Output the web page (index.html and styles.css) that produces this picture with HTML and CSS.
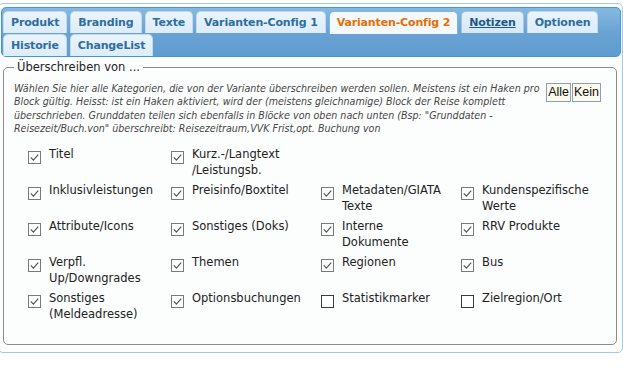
FILE: index.html
```html
<!DOCTYPE html>
<html lang="de">
<head>
<meta charset="utf-8">
<title>Varianten-Config 2</title>
<link rel="stylesheet" href="styles.css">
</head>
<body>
<div class="tabs">
  <ul class="nav">
    <li class="tab"><a>Produkt</a></li>
    <li class="tab"><a>Branding</a></li>
    <li class="tab"><a>Texte</a></li>
    <li class="tab"><a>Varianten-Config 1</a></li>
    <li class="tab active"><a>Varianten-Config 2</a></li>
    <li class="tab hover"><a>Notizen</a></li>
    <li class="tab"><a>Optionen</a></li>
    <li class="tab"><a>Historie</a></li>
    <li class="tab"><a>ChangeList</a></li>
  </ul>
  <div class="panel">
    <fieldset class="group">
      <legend class="group-title">Überschreiben von ...</legend>
      <div class="intro">
        <p class="desc">Wählen Sie hier alle Kategorien, die von der Variante überschreiben werden sollen. Meistens ist ein Haken pro Block gültig. Heisst: ist ein Haken aktiviert, wird der (meistens gleichnamige) Block der Reise komplett überschrieben. Grunddaten teilen sich ebenfalls in Blöcke von oben nach unten (Bsp: "Grunddaten - Reisezeit/Buch.von" überschreibt: Reisezeitraum,VVK Frist,opt. Buchung von</p>
        <div class="btns"><span class="btn">Alle</span><span class="btn">Kein</span></div>
      </div>
      <div class="grid">
        <label class="item"><svg class="cb" viewBox="0 0 13 13" width="13" height="13"><rect x="0.5" y="0.5" width="12" height="12" class="box"/><path d="M2.8 6.4 L5.4 9.2 L10.2 3.6" class="mark"/></svg><span class="lbl">Titel</span></label>
        <label class="item"><svg class="cb" viewBox="0 0 13 13" width="13" height="13"><rect x="0.5" y="0.5" width="12" height="12" class="box"/><path d="M2.8 6.4 L5.4 9.2 L10.2 3.6" class="mark"/></svg><span class="lbl">Kurz.-/Langtext /Leistungsb.</span></label>
        <span class="item"></span>
        <span class="item"></span>

        <label class="item"><svg class="cb" viewBox="0 0 13 13" width="13" height="13"><rect x="0.5" y="0.5" width="12" height="12" class="box"/><path d="M2.8 6.4 L5.4 9.2 L10.2 3.6" class="mark"/></svg><span class="lbl">Inklusivleistungen</span></label>
        <label class="item"><svg class="cb" viewBox="0 0 13 13" width="13" height="13"><rect x="0.5" y="0.5" width="12" height="12" class="box"/><path d="M2.8 6.4 L5.4 9.2 L10.2 3.6" class="mark"/></svg><span class="lbl">Preisinfo/Boxtitel</span></label>
        <label class="item"><svg class="cb" viewBox="0 0 13 13" width="13" height="13"><rect x="0.5" y="0.5" width="12" height="12" class="box"/><path d="M2.8 6.4 L5.4 9.2 L10.2 3.6" class="mark"/></svg><span class="lbl">Metadaten/GIATA Texte</span></label>
        <label class="item"><svg class="cb" viewBox="0 0 13 13" width="13" height="13"><rect x="0.5" y="0.5" width="12" height="12" class="box"/><path d="M2.8 6.4 L5.4 9.2 L10.2 3.6" class="mark"/></svg><span class="lbl">Kundenspezifische Werte</span></label>

        <label class="item"><svg class="cb" viewBox="0 0 13 13" width="13" height="13"><rect x="0.5" y="0.5" width="12" height="12" class="box"/><path d="M2.8 6.4 L5.4 9.2 L10.2 3.6" class="mark"/></svg><span class="lbl">Attribute/Icons</span></label>
        <label class="item"><svg class="cb" viewBox="0 0 13 13" width="13" height="13"><rect x="0.5" y="0.5" width="12" height="12" class="box"/><path d="M2.8 6.4 L5.4 9.2 L10.2 3.6" class="mark"/></svg><span class="lbl">Sonstiges (Doks)</span></label>
        <label class="item"><svg class="cb" viewBox="0 0 13 13" width="13" height="13"><rect x="0.5" y="0.5" width="12" height="12" class="box"/><path d="M2.8 6.4 L5.4 9.2 L10.2 3.6" class="mark"/></svg><span class="lbl">Interne Dokumente</span></label>
        <label class="item"><svg class="cb" viewBox="0 0 13 13" width="13" height="13"><rect x="0.5" y="0.5" width="12" height="12" class="box"/><path d="M2.8 6.4 L5.4 9.2 L10.2 3.6" class="mark"/></svg><span class="lbl">RRV Produkte</span></label>

        <label class="item"><svg class="cb" viewBox="0 0 13 13" width="13" height="13"><rect x="0.5" y="0.5" width="12" height="12" class="box"/><path d="M2.8 6.4 L5.4 9.2 L10.2 3.6" class="mark"/></svg><span class="lbl">Verpfl. Up/Downgrades</span></label>
        <label class="item"><svg class="cb" viewBox="0 0 13 13" width="13" height="13"><rect x="0.5" y="0.5" width="12" height="12" class="box"/><path d="M2.8 6.4 L5.4 9.2 L10.2 3.6" class="mark"/></svg><span class="lbl">Themen</span></label>
        <label class="item"><svg class="cb" viewBox="0 0 13 13" width="13" height="13"><rect x="0.5" y="0.5" width="12" height="12" class="box"/><path d="M2.8 6.4 L5.4 9.2 L10.2 3.6" class="mark"/></svg><span class="lbl">Regionen</span></label>
        <label class="item"><svg class="cb" viewBox="0 0 13 13" width="13" height="13"><rect x="0.5" y="0.5" width="12" height="12" class="box"/><path d="M2.8 6.4 L5.4 9.2 L10.2 3.6" class="mark"/></svg><span class="lbl">Bus</span></label>

        <label class="item"><svg class="cb" viewBox="0 0 13 13" width="13" height="13"><rect x="0.5" y="0.5" width="12" height="12" class="box"/><path d="M2.8 6.4 L5.4 9.2 L10.2 3.6" class="mark"/></svg><span class="lbl">Sonstiges (Meldeadresse)</span></label>
        <label class="item"><svg class="cb" viewBox="0 0 13 13" width="13" height="13"><rect x="0.5" y="0.5" width="12" height="12" class="box"/><path d="M2.8 6.4 L5.4 9.2 L10.2 3.6" class="mark"/></svg><span class="lbl">Optionsbuchungen</span></label>
        <label class="item"><svg class="cb off" viewBox="0 0 13 13" width="13" height="13"><rect x="0.5" y="0.5" width="12" height="12" class="box"/></svg><span class="lbl">Statistikmarker</span></label>
        <label class="item"><svg class="cb off" viewBox="0 0 13 13" width="13" height="13"><rect x="0.5" y="0.5" width="12" height="12" class="box"/></svg><span class="lbl">Zielregion/Ort</span></label>
      </div>
    </fieldset>
  </div>
</div>
</body>
</html>
```

FILE: styles.css
```css
html, body {
  margin: 0;
  padding: 0;
  background: #ffffff;
}

.tabs {
  margin: 3px 0 0 -2px;
  padding: 3px 1px 7px 2px;
  border: 1px solid #a6c9e2;
  border-radius: 5px;
  background: #fcfdfd;
}

.nav {
  list-style: none;
  margin: 0;
  padding: 2px 1px 0 1px;
  display: flex;
  flex-wrap: wrap;
  border: 1px solid #4297d7;
  border-radius: 5px;
  background: linear-gradient(#86b8e1, #6aa3d3 50%, #5f9cd0);
}

.tab {
  margin: 1px 3px 0 0;
  height: 21px;
  border: 1px solid #c5dbec;
  border-bottom: 0;
  border-radius: 5px 5px 0 0;
  background: linear-gradient(#eaf4fc, #dcecf9);
}

.tab a {
  display: block;
  padding: 0 7px;
  line-height: 21px;
  font-family: "DejaVu Sans", sans-serif;
  font-weight: bold;
  font-size: 11px;
  letter-spacing: -0.15px;
  color: #2e6e9e;
  white-space: nowrap;
}

.tab.active {
  height: 22px;
  margin-bottom: -1px;
  border-color: #79b7e7;
  background: #f5f8f9;
}

.tab.active a {
  color: #e17009;
}

.tab.hover {
  border-color: #9fc6e8;
  background: linear-gradient(#e6f1fb, #d5e8f7);
}

.tab.hover a {
  color: #1d5987;
  text-decoration: underline;
}

.panel {
  padding: 3px 4px 0 2px;
}

.group {
  min-width: 0;
  margin: 0;
  padding: 2px 15px 22px 10px;
  border: 1px solid #8c8c8c;
  border-radius: 5px;
  font-family: "DejaVu Sans", sans-serif;
}

.group-title {
  padding: 0 3px;
  font-size: 11.5px;
  line-height: 14px;
  color: #222222;
}

.intro {
  display: flex;
  align-items: flex-start;
  margin-top: 6px;
}

.desc {
  flex: 1;
  margin: 0;
  padding-right: 4px;
  font-family: "DejaVu Sans Condensed", "DejaVu Sans", sans-serif;
  font-style: italic;
  font-size: 10.6px;
  line-height: 13.4px;
  color: #454545;
}

.btns {
  display: flex;
  gap: 1px;
  margin-top: 1px;
}

.btn {
  padding: 0 1px;
  border: 1px solid #8a9fb8;
  background: #fcfaea;
  font-family: "Liberation Sans", Arial, sans-serif;
  font-size: 12.5px;
  line-height: 17px;
  color: #111111;
}

.grid {
  display: grid;
  grid-template-columns: 143px 150px 140px minmax(0, 1fr);
  row-gap: 4px;
  margin: 10px 0 0 14px;
}

.item {
  display: flex;
  align-items: flex-start;
  padding-right: 8px;
  font-size: 11.5px;
  line-height: 16px;
  color: #222222;
}

.cb {
  flex: none;
  margin: 5px 8px 0 0;
}

.cb .box {
  fill: #ffffff;
  stroke: #7a7a7a;
}

.cb.off .box {
  stroke: #3c3c3c;
}

.cb .mark {
  fill: none;
  stroke: #555555;
  stroke-width: 1.2;
}

.lbl {
  min-height: 32px;
}
```
